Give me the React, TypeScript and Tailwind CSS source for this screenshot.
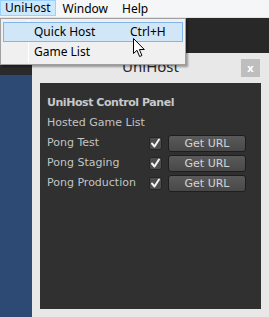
import React from "react";

const rows = ["Pong Test", "Pong Staging", "Pong Production"];

const Check = () => (
  <div className="w-[13px] h-[13px] rounded-[2px] bg-[#4c4c4c] border border-[#262626] flex items-center justify-center">
    <svg width="11" height="11" viewBox="0 0 11 11">
      <path d="M2 5.5 L4.5 8.5 L9 1.5" stroke="#f2f2f2" strokeWidth="2" fill="none" strokeLinecap="round" strokeLinejoin="round" />
    </svg>
  </div>
);

const Cursor = () => (
  <svg width="13" height="20" viewBox="0 0 13 20" className="absolute left-[133px] top-[38px]">
    <path d="M0.5 0.5 L0.5 15.5 L4 12.3 L6.6 18.5 L8.9 17.5 L6.4 11.5 L11.3 11.5 Z" fill="#ffffff" stroke="#000000" strokeWidth="1" strokeLinejoin="round" />
  </svg>
);

export default function App() {
  return (
    <div className="relative w-[269px] h-[317px] overflow-hidden flex flex-col bg-[#282828]" style={{ fontFamily: '"Noto Sans", "Open Sans", sans-serif' }}>
      {/* menu bar */}
      <div className="h-[18px] bg-[#f5f6f7] border-b border-[#e3e3e3] flex text-[12px] text-black leading-[16px]">
        <div className="px-[4px] bg-[#cce8ff] border border-[#99d1ff] h-[16px] flex items-center">UniHost</div>
        <div className="px-[7px] flex items-center">Window</div>
        <div className="px-[7px] flex items-center">Help</div>
      </div>

      {/* workspace */}
      <div className="flex flex-1">
        <div className="w-[32px] flex flex-col">
          <div className="h-[57px] bg-[#2a2a2a]" />
          <div className="flex-1 bg-[#2d4a75]" />
        </div>
        <div className="flex-1 flex flex-col pt-[35px]">
          <div className="flex-1 bg-[#e8e8e8] flex flex-col">
            <div className="h-[30px] relative flex items-center justify-center">
              <span className="text-[15px] text-[#2b2b2b] mb-[3px]">UniHost</span>
              <div className="absolute right-[9px] top-[6px] w-[19px] h-[18px] bg-[#bebebe] flex items-center justify-center text-white text-[11px] font-bold leading-none pb-[2px]">x</div>
            </div>
            <div className="flex-1 mx-[8px] mb-[8px] bg-[#303030] pl-[7px] pt-[10px] text-[#c4c4c4] text-[11px] leading-[20px]" style={{ fontFamily: '"DejaVu Sans", Verdana, sans-serif' }}>
              <div className="font-bold text-[#c8c8c8] tracking-[-0.45px]">UniHost Control Panel</div>
              <div>Hosted Game List</div>
              {rows.map((r) => (
                <div key={r} className="flex items-center h-[20px]">
                  <div className="w-[102px]">{r}</div>
                  <Check />
                  <button className="ml-[6px] w-[78px] h-[17px] rounded-[3px] border border-[#1e1e1e] bg-gradient-to-b from-[#5a5a5a] to-[#484848] text-[#d4d4d4] text-[11px] leading-[15px]">Get URL</button>
                </div>
              ))}
            </div>
          </div>
        </div>
      </div>

      {/* dropdown menu */}
      <div className="absolute left-0 top-[18px] w-[186px] h-[47px] bg-[#f0f0f0] border border-[#a0a0a0] shadow-[2px_2px_2px_rgba(0,0,0,0.35)] text-[12px] text-black py-[3px] px-[2px]">
        <div className="absolute left-[27px] top-[1px] bottom-[1px] w-px bg-[#e2e2e2] border-r border-white" />
        <div className="relative h-[20px] bg-[#d1e6f7] border border-[#80b6ec] flex items-center">
          <span className="ml-[30px]">Quick Host</span>
          <span className="absolute left-[126px]">Ctrl+H</span>
        </div>
        <div className="relative h-[20px] flex items-center">
          <span className="ml-[31px]">Game List</span>
        </div>
      </div>
      <Cursor />
    </div>
  );
}
